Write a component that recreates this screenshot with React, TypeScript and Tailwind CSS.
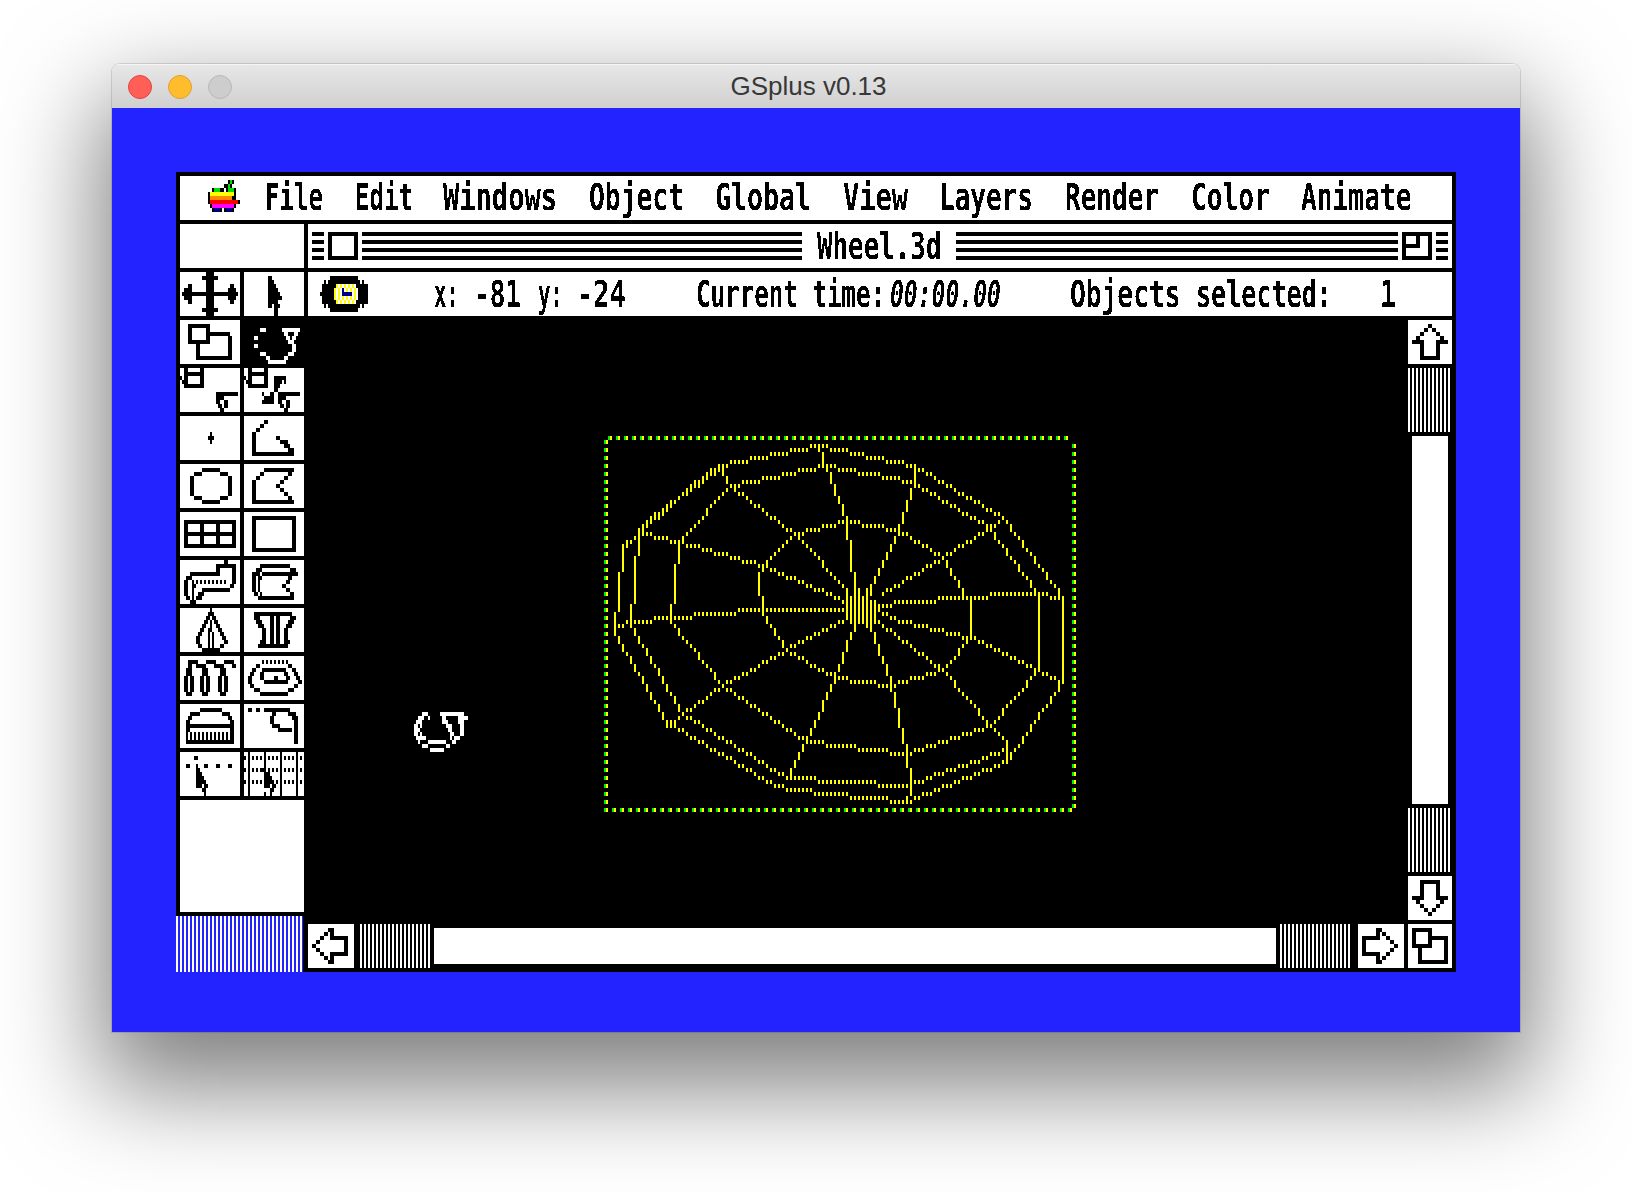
import type { ReactNode } from "react";

const PALETTE: Record<string, string> = {
  k: "#000000",
  g: "#00dd00",
  y: "#ffff00",
  o: "#ff8800",
  r: "#ff0000",
  m: "#ff00ff",
  n: "#000088",
  w: "#ffffff",
  b: "#0000ff",
};

// every pixel of the emulated screen is 2 wide and 4 tall
function Pixels({ rows, ink = "#000000", flip = false, className = "" }: { rows: string[]; ink?: string; flip?: boolean; className?: string }) {
  const cols = Math.max(...rows.map((r) => r.length));
  const list = flip ? [...rows].reverse() : rows;
  return (
    <svg width={cols * 2} height={list.length * 4} shapeRendering="crispEdges" className={`block flex-none ${className}`}>
      {list.flatMap((row, y) =>
        row.split("").map((c, x) =>
          c === "." ? null : <rect key={`${x}-${y}`} x={x * 2} y={y * 4} width={2} height={4} fill={c === "#" ? ink : PALETTE[c]} />
        )
      )}
    </svg>
  );
}

function Word({ text, className, sx, italic }: { text: string; className: string; sx: string; italic?: boolean }) {
  return (
    <span className={`block flex-none h-[44px] leading-[44px] text-[38px] font-bold text-black whitespace-nowrap font-['DejaVu_Sans_Mono',monospace] [filter:url(#crisp)] ${className}`}>
      <span className={`inline-block origin-left -ml-[2px] ${sx} ${italic ? "italic" : ""}`}>{text}</span>
    </span>
  );
}

const RESIZE_TOOL = [
  "..............................",
  "....###########...............",
  "....##.......##...............",
  "....##.......############.....",
  "....##.......##.........##....",
  "....###########.........##....",
  "........##..............##....",
  "........##..............##....",
  "........##..............##....",
  "........##################....",
  "..............................",
];
const ROTATE_TOOL = [
  "..............................",
  "..............................",
  "........###........#########..",
  "....................##...##...",
  ".....##..............##.##....",
  "......................###.....",
  ".....##.................##....",
  "........................##....",
  "........###...........###.....",
  "...........##.......##........",
  "............#########.........",
];
const SCALE_TOOL = [
  "..##......##..................",
  "..##########..................",
  "#.##......##..................",
  ".###......##..................",
  "..##########..................",
  "..............................",
  "..................###########.",
  "..................####........",
  "..................##..##......",
  "...................##.##......",
  "....................##........",
];
const SCALE_ALL_TOOL = [
  "..##......##..................",
  "..##########..................",
  "#.##......##...######.........",
  ".###......##...####.#.........",
  "..##########...###............",
  "...............##.............",
  ".........#...##..###########..",
  "..........#####..####.........",
  ".........######..##..##.......",
  "..................##.##.......",
  "....................##........",
];
const DOT_TOOL = [
  "..............................",
  "..............................",
  "..............................",
  "..............................",
  "...............#..............",
  "..............###.............",
  "...............#..............",
  "..............................",
  "..............................",
  "..............................",
  "..............................",
];
const OPEN_POLY_TOOL = [
  "..............................",
  "..........##..................",
  "........##....................",
  "......##......................",
  "....##........................",
  "....##..........##............",
  "....##............####........",
  "....##..............###.......",
  "....##................###.....",
  "....#####################.....",
  "..............................",
];
const CIRCLE_TOOL = [
  "..............................",
  "...........#########..........",
  ".......####.........####......",
  ".....##.................##....",
  ".....##.................##....",
  ".....##.................##....",
  ".....##.................##....",
  ".....##.................##....",
  ".......####.........####......",
  "...........#########..........",
  "..............................",
];
const POLY_TOOL = [
  "..............................",
  "..........###############.....",
  "........##............##......",
  "......##............##........",
  "....##............##..........",
  "....##..........##............",
  "....##............##..........",
  "....##..............##........",
  "....##................##......",
  "....#####################.....",
  "..............................",
];
const GRID_TOOL = [
  "..............................",
  "..............................",
  "..##########################..",
  "..##......##......##......##..",
  "..##......##......##......##..",
  "..##########################..",
  "..##......##......##......##..",
  "..##......##......##......##..",
  "..##########################..",
  "..............................",
  "..............................",
];
const RECT_TOOL = [
  "..............................",
  "....######################....",
  "....##..................##....",
  "....##..................##....",
  "....##..................##....",
  "....##..................##....",
  "....##..................##....",
  "....##..................##....",
  "....##..................##....",
  "....######################....",
  "..............................",
];
const PIPE_TOOL = [
  "......................##......",
  "..................##########..",
  "..................##......##..",
  ".....###############......##..",
  "...###....................##..",
  "..##..#.#.#.#.#.#.#.#.#...##..",
  "..##..##.................##...",
  "..##..#....##############.....",
  "..##..#..###..................",
  "...##.#.###...................",
  ".....###......................",
];
const EXTRUDE_TOOL = [
  "..............................",
  "........###############.......",
  "......###..............###....",
  "....####.##################...",
  "....##.##.............##......",
  "....##.#.............##.......",
  "....##.#...........##.........",
  "....##.#.............##.......",
  ".....##.#..............##.....",
  ".......##################.....",
  "..............................",
];
const CONE_TOOL = [
  "...............#..............",
  "..............###.............",
  ".............##.##............",
  "............##.#.##...........",
  "...........##..#..##..........",
  "..........##..##...##.........",
  ".........##...#.#...##........",
  "........##....#.#....##.......",
  "........##....#.#.....##......",
  ".........##...#.#...##........",
  "...........#########..........",
];
const GOBLET_TOOL = [
  "..............................",
  ".....###################......",
  ".....###.....##.##.....###....",
  "......###....##.##....###.....",
  ".......###...##.##...###......",
  ".........##..##.##..##........",
  ".........##..##.##..##........",
  ".........##..##.##..##........",
  "........###..##.##..###.......",
  ".......###############........",
  "..............................",
];
const DROPS_TOOL = [
  "..............................",
  "....#####....#####....#####...",
  "....##..#####....#####....##..",
  "...###.....###......###.......",
  "...###.....###......###.......",
  "..##.##...##.##....##.##......",
  "..##.##...##.##....##.##......",
  "..##.##...##.##....##.##......",
  "..##.##...##.##....##.##......",
  "...###.....###......###.......",
  "..............................",
];
const TORUS_TOOL = [
  "..............................",
  ".........#.#.#.#.#.#.#........",
  "......##..............##......",
  "....##...############...##....",
  "...##...##..........##...##...",
  "..##....##.....##....##...##..",
  "..##......############.....##.",
  "...##....................##...",
  ".....###..............###.....",
  "........##############........",
  "..............................",
];
const DOME_TOOL = [
  "..............................",
  "..........###########.........",
  ".....#####...........####.....",
  "....##..................##....",
  "...##....................##...",
  "...########################...",
  "...##....................##...",
  "...#.#.#.#.#.#.#.#.#.#.#.##...",
  "...#.#.#.#.#.#.#.#.#.#.#.##...",
  "...########################...",
  "..............................",
];
const FREEHAND_TOOL = [
  "..............................",
  "..##..##..#############.......",
  "..............##......####....",
  ".............##.........###...",
  ".............##..........##...",
  "..............####.......##...",
  ".................#######.##...",
  ".........................##...",
  ".........................##...",
  ".........................##...",
  "..............................",
];
const DOTS_TOOL = [
  "..............................",
  ".......##.....................",
  "..............................",
  "...##...#...##....##....##....",
  "........##....................",
  "........###...................",
  "........####..................",
  "........#####.................",
  "........###.##................",
  "...........##.................",
  "............#.................",
];
const DOT_GRID_TOOL = [
  "..#.......#.......#.......#...",
  "#.#.#.#.#.#.#.#.#.#.#.#.#.#.#.",
  "..#.......#.......#.......#...",
  "..#.......#.......#.......#...",
  "#.#.#.#.###.#.#.#.#.#.#.#.#.#.",
  "..#.......###.....#.......#...",
  "..#.......####....#.......#...",
  "#.#.#.#.#.#####.#.#.#.#.#.#.#.",
  "..#.......###.##..#.......#...",
  "..#..........##...#.......#...",
  "..#.......#..#....#.......#...",
];

const TOOLS: string[][] = [
  SCALE_TOOL, SCALE_ALL_TOOL,
  DOT_TOOL, OPEN_POLY_TOOL,
  CIRCLE_TOOL, POLY_TOOL,
  GRID_TOOL, RECT_TOOL,
  PIPE_TOOL, EXTRUDE_TOOL,
  CONE_TOOL, GOBLET_TOOL,
  DROPS_TOOL, TORUS_TOOL,
  DOME_TOOL, FREEHAND_TOOL,
  DOTS_TOOL, DOT_GRID_TOOL,
];

const MOVE_TOOL = [
  ".............####.............",
  "...........########...........",
  ".............####.............",
  "....##.......####........##...",
  "..####.......####.......####..",
  ".############################.",
  "..####.......####.......####..",
  "....##.......####........##...",
  ".............####.............",
  "...........########...........",
  ".............####.............",
];
const ARROW_TOOL = [
  "..............................",
  "............##................",
  "............###...............",
  "............####..............",
  "............#####.............",
  "............######............",
  "............#######...........",
  "............#####.............",
  "............##.###............",
  "...............##.............",
  "...............##.............",
];
const APPLE = [
  "..........kgk...",
  "........kkgk....",
  "..kgggkk.kgggk..",
  "kyyyyyyyyyyyyk..",
  "koooooooooookk..",
  "krrrrrrrrrrrrrrk",
  ".kmmmmmmmmmmmk..",
  "..knnnk.knnnk...",
];
const CLOCK = [
  ".....kkkkkkkkkkkkkk.....",
  "..k.kkkkkkkkkkkkkkkk.k..",
  ".kkkkkkkywywywywywkkkkkk",
  ".kkkkkkywywnwywywywkkkkk",
  "kkkkkkkywywnnnnnwywkkkkk",
  ".kkkkkkywywywywywywkkkkk",
  ".kkkkkkkywywywywywkkkkkk",
  "..k.kkkkkkkkkkkkkkkk.k..",
  ".....kkkkkkkkkkkkkk.....",
];
const UP_ARROW = [
  "......................",
  "..........##..........",
  "........##..##........",
  "......##......##......",
  "....##..........##....",
  "..######......######..",
  "......##......##......",
  "......##......##......",
  "......##......##......",
  "......##########......",
  "......................",
];
const RIGHT_ARROW = [
  "......................",
  ".........###..........",
  ".........##.##........",
  "..#########...##......",
  "..##............##....",
  "..##..............##..",
  "..##............##....",
  "..#########...##......",
  ".........##.##........",
  ".........###..........",
  "......................",
];
const LEFT_ARROW = RIGHT_ARROW.map((r) => r.split("").reverse().join(""));
const RESIZE_BOX = [
  "......................",
  "..##########..........",
  "..##......##..........",
  "..##......##########..",
  "..##......##......##..",
  "..##########......##..",
  ".....##...........##..",
  ".....##...........##..",
  ".....##...........##..",
  ".....###############..",
  "......................",
];
const ROTATE_CURSOR = [
  "....###......############.",
  "..###..#......##......#####",
  ".###..........###.....###..",
  "##.#............###....##..",
  "###..............##....##..",
  "##.#..............##...##..",
  ".#####............#.###....",
  "..#....#########...##......",
  "....###.........##.........",
  "........#######............",
];

// wireframe, traced as polylines in 3x crop coordinates of the picture
const WIRES: number[][][] = [
  [[770, 308], [925, 330], [1050, 410], [1130, 530], [1142, 535], [1142, 655], [1050, 745], [905, 795], [735, 770], [590, 690], [510, 585], [507, 470], [520, 440], [615, 340], [770, 308]],
  [[425, 195], [710, 140], [965, 190], [1190, 320], [1345, 520], [1345, 745], [1205, 915], [950, 1000], [650, 970], [395, 800], [243, 610], [267, 365], [425, 195]],
  [[385, 135], [680, 75], [975, 135], [1240, 295], [1420, 530], [1420, 790], [1250, 1030], [950, 1145], [610, 1105], [555, 1095], [230, 910], [75, 645], [98, 385], [300, 195], [385, 135]],
  [[147, 335], [320, 190]],
  [[185, 290], [385, 150]],
  [[147, 325], [125, 620], [270, 885], [590, 1075], [950, 1095], [1250, 995]],
  [[680, 75], [770, 310], [795, 515]],
  [[975, 135], [975, 190], [925, 330], [845, 500], [830, 540]],
  [[1240, 295], [1190, 325], [1050, 410], [880, 525]],
  [[1420, 530], [1345, 518], [1250, 520], [1140, 535], [930, 548], [860, 560]],
  [[1410, 780], [1345, 745], [1140, 655], [930, 600], [860, 575]],
  [[1250, 1030], [1250, 965], [1205, 915], [1050, 745], [860, 600]],
  [[950, 1145], [965, 1095], [950, 1000], [905, 780], [830, 590]],
  [[590, 1075], [650, 965], [735, 770], [795, 620]],
  [[230, 915], [270, 885], [395, 800], [590, 690], [770, 590]],
  [[75, 620], [125, 605], [243, 595], [507, 570], [770, 570]],
  [[100, 380], [150, 340], [265, 365], [510, 435], [770, 545]],
  [[385, 135], [425, 195], [615, 345], [770, 510]],
  [[770, 505], [770, 580]],
  [[783, 530], [783, 600]],
  [[795, 520], [795, 620]],
  [[807, 515], [807, 600]],
  [[820, 530], [820, 600]],
  [[832, 505], [832, 620]],
  [[845, 540], [845, 610]],
  [[857, 540], [857, 610]],
];

function wireCells() {
  const cells = new Set<string>();
  const toCell = ([x, y]: number[]) => [Math.floor((590 + x / 3 - 604) / 4), Math.floor((420 + y / 3 - 436) / 4)];
  for (const line of WIRES) {
    for (let i = 0; i < line.length - 1; i++) {
      const [x0, y0] = toCell(line[i]);
      const [x1, y1] = toCell(line[i + 1]);
      const steps = Math.max(Math.abs(x1 - x0), Math.abs(y1 - y0), 1);
      for (let s = 0; s <= steps; s++) {
        cells.add(`${Math.round(x0 + ((x1 - x0) * s) / steps)},${Math.round(y0 + ((y1 - y0) * s) / steps)}`);
      }
    }
  }
  return [...cells].map((c) => c.split(",").map(Number));
}

function Wheel({ className }: { className: string }) {
  const box: number[][] = [];
  for (let x = 1; x <= 115; x += 2) box.push([x, 0]);
  for (let x = 0; x <= 116; x += 2) box.push([x, 93]);
  for (let y = 1; y <= 91; y += 2) box.push([0, y]);
  for (let y = 2; y <= 92; y += 2) box.push([117, y]);
  return (
    <svg width={476} height={376} shapeRendering="crispEdges" className={className}>
      {box.map(([x, y]) => (
        <g key={`b${x}-${y}`}>
          <rect x={x * 4} y={y * 4} width={2} height={4} fill="#00ee00" />
          <rect x={x * 4 + 2} y={y * 4} width={2} height={4} fill="#ffff00" />
        </g>
      ))}
      {wireCells().map(([x, y]) => (
        <rect key={`${x}-${y}`} x={x * 4 + 2} y={y * 4} width={2} height={4} fill="#ffff00" />
      ))}
    </svg>
  );
}

function Lines({ className }: { className: string }) {
  return (
    <div className={`flex flex-none flex-col gap-1 ${className}`}>
      <div className="h-1 bg-black" />
      <div className="h-1 bg-black" />
      <div className="h-1 bg-black" />
      <div className="h-1 bg-black" />
    </div>
  );
}

function Cell({ children, className = "w-[60px]" }: { children: ReactNode; className?: string }) {
  return <div className={`h-[44px] flex-none bg-white ${className}`}>{children}</div>;
}

const HATCH = "bg-[repeating-linear-gradient(90deg,#fff_0,#fff_2px,#000_2px,#000_4px)]";

export default function App() {
  return (
    <div className="h-[1192px] w-[1632px] overflow-hidden bg-white pl-[112px] pt-[64px]">
      {/* hardens the text edges so it reads as screen pixels */}
      <svg className="absolute h-0 w-0">
        <filter id="crisp" x="-20%" y="-20%" width="140%" height="140%">
          <feComponentTransfer>
            <feFuncA type="discrete" tableValues="0 1" />
          </feComponentTransfer>
        </filter>
      </svg>

      <div className="h-[968px] w-[1408px] overflow-hidden rounded-t-[8px] shadow-[0_44px_100px_12px_rgba(0,0,0,0.5),0_0_0_1px_rgba(0,0,0,0.12)]">
        <div className="relative flex h-[44px] items-center justify-center border-t border-[#f4f4f4] bg-[linear-gradient(#e8e7e8,#d1d0d1)] pr-[15px]">
          <div className="absolute left-[16px] top-[10px] flex gap-4">
            <div className="h-6 w-6 rounded-full border border-[#e0443e] bg-[#ff5f57]" />
            <div className="h-6 w-6 rounded-full border border-[#dea034] bg-[#ffbd2e]" />
            <div className="h-6 w-6 rounded-full border border-[#b8b8b8] bg-[#cdcdcd]" />
          </div>
          <span className="font-['Liberation_Sans',sans-serif] text-[26px] text-[#383838]">GSplus v0.13</span>
        </div>

        <div className="h-[924px] bg-[#2323ff] pl-[64px] pt-[64px]">
          <div className="flex h-[800px] w-[1280px] flex-col bg-black">
            {/* menu bar */}
            <div className="mx-1 mt-1 flex h-[44px] items-center bg-white pb-[2px]">
              <Pixels rows={APPLE} className="mb-[2px] ml-[28px]" />
              <Word text="File" className="ml-[27px] w-[55px]" sx="scale-x-[0.634]" />
              <Word text="Edit" className="ml-[35px] w-[55px]" sx="scale-x-[0.634]" />
              <Word text="Windows" className="ml-[33px] w-[111px]" sx="scale-x-[0.712]" />
              <Word text="Object" className="ml-[35px] w-[92px]" sx="scale-x-[0.692]" />
              <Word text="Global" className="ml-[34px] w-[93px]" sx="scale-x-[0.7]" />
              <Word text="View" className="ml-[35px] w-[62px]" sx="scale-x-[0.71]" />
              <Word text="Layers" className="ml-[34px] w-[91px]" sx="scale-x-[0.685]" />
              <Word text="Render" className="ml-[35px] w-[91px]" sx="scale-x-[0.685]" />
              <Word text="Color" className="ml-[35px] w-[76px]" sx="scale-x-[0.69]" />
              <Word text="Animate" className="ml-[34px] w-[108px]" sx="scale-x-[0.69]" />
            </div>

            {/* window title row */}
            <div className="mx-1 mt-1 flex h-[44px] gap-1">
              <div className="w-[124px] flex-none bg-white" />
              <div className="flex flex-1 items-center bg-white pl-1">
                <Lines className="w-3" />
                <div className="ml-1 h-[28px] w-[30px] flex-none border-4 border-black" />
                <Lines className="ml-1 w-[440px]" />
                <Word text="Wheel.3d" className="ml-[17px] w-[123px]" sx="scale-x-[0.68]" />
                <Lines className="ml-[14px] w-[442px]" />
                <div className="relative ml-1 h-[28px] w-[30px] flex-none border-4 border-black">
                  <div className="h-[12px] w-[14px] border-b-4 border-r-4 border-black" />
                </div>
                <Lines className="ml-1 w-3" />
              </div>
            </div>

            <div className="mt-1 flex flex-1">
              {/* tool palette */}
              <div className="flex w-[132px] flex-none flex-col">
                <div className="grid grid-cols-[60px_60px] gap-1 pl-1">
                  <Cell><Pixels rows={MOVE_TOOL} /></Cell>
                  <Cell><Pixels rows={ARROW_TOOL} /></Cell>
                  <Cell><Pixels rows={RESIZE_TOOL} /></Cell>
                  <div className="h-[44px] bg-black"><Pixels rows={ROTATE_TOOL} ink="#ffffff" /></div>
                  {TOOLS.map((rows, i) => (
                    <Cell key={i}><Pixels rows={rows} /></Cell>
                  ))}
                </div>
                <div className="ml-1 mt-1 h-[112px] w-[124px] bg-white" />
                <div className="mt-1 h-[56px] w-[127px] bg-[repeating-linear-gradient(90deg,#fff_0,#fff_2px,#2323ff_2px,#2323ff_4px)]" />
              </div>

              <div className="flex flex-1 flex-col pr-1">
                {/* status line */}
                <div className="flex h-[44px] flex-none items-center bg-white">
                  <Pixels rows={CLOCK} className="ml-[12px]" />
                  <Word text="x:" className="ml-[68px] w-[22px]" sx="scale-x-[0.546]" />
                  <Word text="-81" className="ml-[18px] w-[44px]" sx="scale-x-[0.685]" />
                  <Word text="y:" className="ml-[20px] w-[22px]" sx="scale-x-[0.546]" />
                  <Word text="-24" className="ml-[17px] w-[46px]" sx="scale-x-[0.71]" />
                  <Word text="Current time:" className="ml-[73px] w-[186px]" sx="scale-x-[0.636]" />
                  <Word text="00:00.00" className="ml-[8px] w-[108px]" sx="scale-x-[0.606]" italic />
                  <Word text="Objects" className="ml-[72px] w-[107px]" sx="scale-x-[0.69]" />
                  <Word text="selected:" className="ml-[19px] w-[133px]" sx="scale-x-[0.66]" />
                  <Word text="1" className="ml-[51px] w-[12px]" sx="scale-x-[0.7]" />
                </div>

                <div className="flex h-[604px] flex-none">
                  {/* drawing canvas */}
                  <div className="relative flex-1">
                    <Wheel className="absolute left-[296px] top-[120px]" />
                    <Pixels rows={ROTATE_CURSOR} ink="#ffffff" className="absolute left-[106px] top-[396px]" />
                  </div>
                  {/* vertical scroll bar */}
                  <div className="flex w-[44px] flex-none flex-col gap-1 pt-1">
                    <Cell className="w-[44px]"><Pixels rows={UP_ARROW} /></Cell>
                    <div className={`h-[64px] w-[42px] ${HATCH}`} />
                    <div className="mx-1 h-[368px] w-[36px] bg-white" />
                    <div className={`h-[64px] w-[42px] ${HATCH}`} />
                    <Cell className="w-[44px]"><Pixels rows={UP_ARROW} flip /></Cell>
                  </div>
                </div>

                {/* horizontal scroll bar */}
                <div className="mt-1 flex h-[44px] flex-none">
                  <Cell className="w-[46px]"><Pixels rows={LEFT_ARROW} /></Cell>
                  <div className={`ml-[6px] h-[44px] w-[72px] ${HATCH}`} />
                  <div className="ml-[2px] mt-1 h-[36px] w-[842px] bg-white" />
                  <div className={`ml-1 h-[44px] w-[70px] ${HATCH}`} />
                  <Cell className="ml-[8px] w-[46px]"><Pixels rows={RIGHT_ARROW} /></Cell>
                  <Cell className="ml-1 w-[44px]"><Pixels rows={RESIZE_BOX} /></Cell>
                </div>
              </div>
            </div>
          </div>
        </div>
      </div>
    </div>
  );
}
